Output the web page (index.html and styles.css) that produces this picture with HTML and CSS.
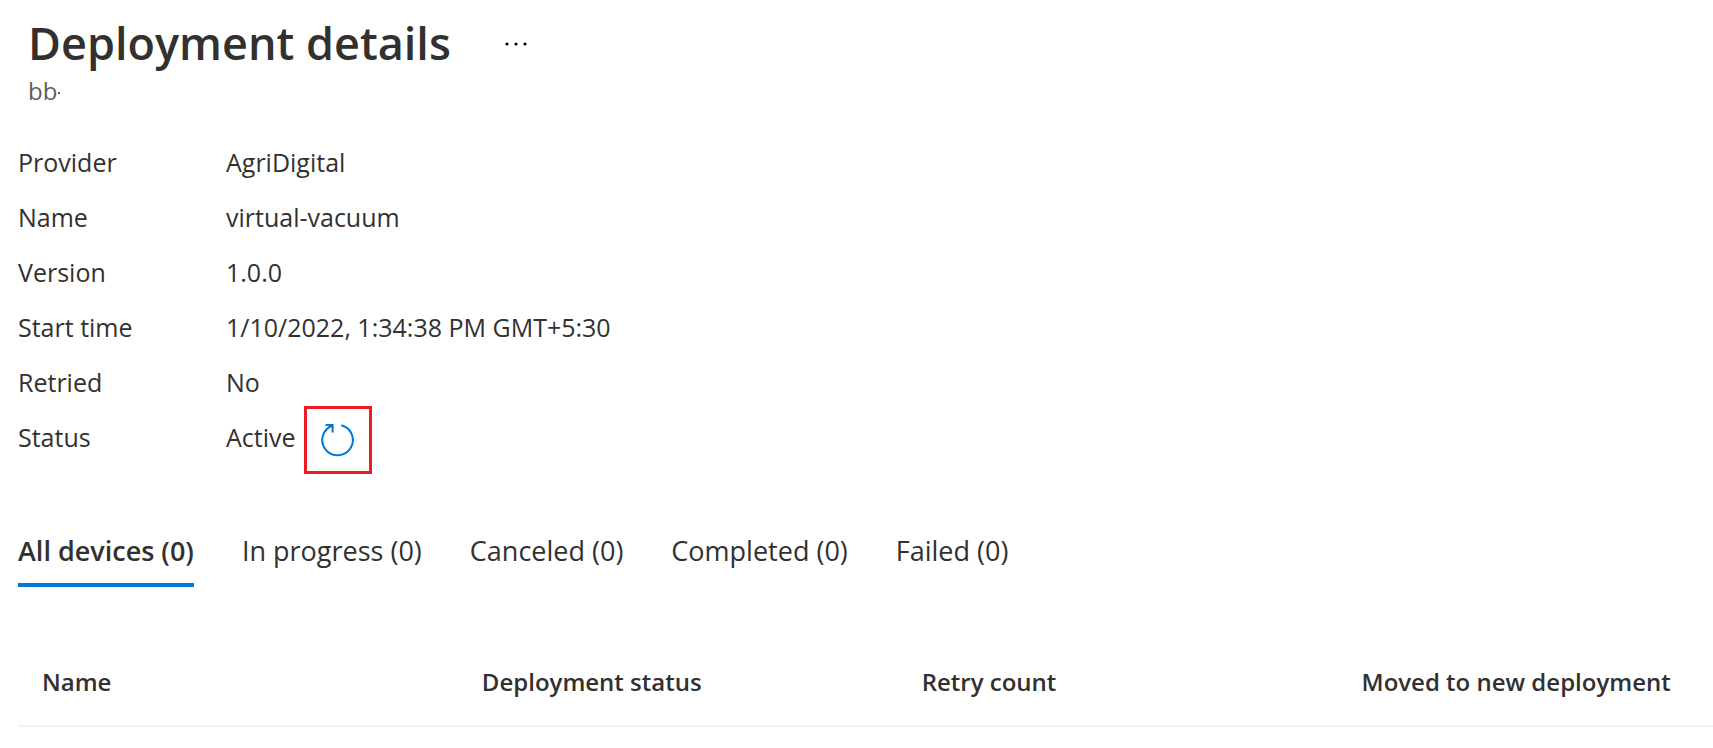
FILE: index.html
```html
<!DOCTYPE html>
<html lang="en">
<head>
<meta charset="utf-8">
<meta name="viewport" content="width=device-width, initial-scale=1">
<title>Deployment details</title>
<link rel="stylesheet" href="styles.css">
</head>
<body>
<header class="page-header">
  <div class="title-row">
    <h1 class="title">Deployment details</h1>
    <button class="more" type="button" aria-label="More actions">
      <svg width="24" height="8" viewBox="0 0 24 8" aria-hidden="true"><circle cx="3" cy="5" r="1.6"/><circle cx="12" cy="5" r="1.6"/><circle cx="21" cy="5" r="1.6"/></svg>
    </button>
  </div>
  <p class="subtitle">bb<span class="speck"></span></p>
</header>
<main class="content">
  <dl class="details">
    <dt>Provider</dt><dd>AgriDigital</dd>
    <dt>Name</dt><dd>virtual-vacuum</dd>
    <dt>Version</dt><dd>1.0.0</dd>
    <dt>Start time</dt><dd>1/10/2022, 1:34:38 PM GMT+5:30</dd>
    <dt>Retried</dt><dd>No</dd>
    <dt>Status</dt>
    <dd class="status">Active
      <button class="refresh" type="button" aria-label="Refresh status">
        <svg width="36" height="36" viewBox="0 0 36 36" aria-hidden="true"><path d="M21.3 3.2A15.3 15.3 0 1 1 12.2 3.7M5.6 3H12.6V10.4"/></svg>
      </button>
    </dd>
  </dl>
  <div class="tabs" role="tablist">
    <button class="tab tab-active" type="button" role="tab" aria-selected="true">All devices (0)</button>
    <button class="tab" type="button" role="tab" aria-selected="false">In progress (0)</button>
    <button class="tab" type="button" role="tab" aria-selected="false">Canceled (0)</button>
    <button class="tab" type="button" role="tab" aria-selected="false">Completed (0)</button>
    <button class="tab" type="button" role="tab" aria-selected="false">Failed (0)</button>
  </div>
  <table class="devices">
    <thead>
      <tr><th scope="col">Name</th><th scope="col">Deployment status</th><th scope="col">Retry count</th><th scope="col">Moved to new deployment</th></tr>
    </thead>
  </table>
</main>
</body>
</html>
```

FILE: styles.css
```css
* {
  box-sizing: border-box;
}

body {
  margin: 0;
  background: #fff;
  color: #323130;
  font-family: "Segoe UI", "Open Sans", "Noto Sans", sans-serif;
  font-size: 24px;
  line-height: 32px;
}

button {
  padding: 0;
  border: 0;
  background: none;
  color: inherit;
  font: inherit;
  cursor: pointer;
}

svg {
  display: block;
}

.page-header {
  padding: 11px 28px 0;
}

.title-row {
  display: flex;
  align-items: center;
  gap: 53px;
}

.title {
  margin: 0;
  font-size: 45px;
  font-weight: 600;
  line-height: 64px;
}

.more {
  color: #000;
  fill: currentColor;
}

.subtitle {
  display: flex;
  align-items: center;
  gap: 1px;
  margin: 0;
  color: #605e5c;
}

.speck {
  width: 2px;
  height: 2px;
  margin-top: 4px;
  background: currentColor;
}

.content {
  padding-left: 18px;
}

.details {
  display: grid;
  grid-template-columns: 208px 1fr;
  grid-auto-rows: 55px;
  align-items: center;
  margin: 27px 0 0;
  font-size: 25px;
}

.details dd {
  margin: 0;
}

.status {
  display: flex;
  align-items: center;
  gap: 8px;
}

.refresh {
  display: grid;
  place-items: center;
  width: 68px;
  height: 68px;
  margin-top: 6px;
  border: 3px solid #ed1c24;
}

.refresh svg {
  fill: none;
  stroke: #0078d4;
  stroke-width: 2;
}

.tabs {
  display: flex;
  gap: 48px;
  margin-top: 69px;
}

.tab {
  padding: 0 0 14px;
  border-bottom: 4px solid transparent;
  font-size: 27px;
  line-height: 36px;
}

.tab-active {
  border-color: #0078d4;
  font-weight: 600;
}

.devices {
  width: 100%;
  margin-top: 60px;
  border-collapse: collapse;
  table-layout: fixed;
}

.devices th {
  width: 25.95%;
  padding: 19px 0 27px 24px;
  border-bottom: 2px solid #f3f2f1;
  font-weight: 600;
  text-align: left;
  white-space: nowrap;
}

.devices th:last-child {
  width: auto;
}
```
